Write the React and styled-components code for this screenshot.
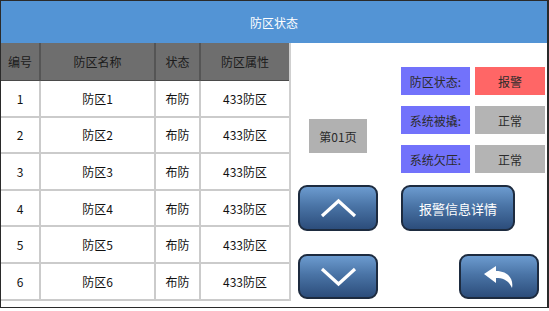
import React from "react";
import styled, { createGlobalStyle } from "styled-components";

const GlobalStyle = createGlobalStyle`
  html, body {
    margin: 0;
    padding: 0;
    background: #ffffff;
  }
  body {
    font-family: "Noto Sans CJK SC", "Liberation Sans", sans-serif;
  }
`;

const Frame = styled.div`
  width: 546px;
  height: 306px;
  border: 1px solid #2a2a2a;
  border-right-width: 2px;
  background: #ffffff;
  display: flex;
  flex-direction: column;
  overflow: hidden;
`;

const TitleBar = styled.div`
  height: 42px;
  background: #5394d5;
  color: #ffffff;
  font-size: 12px;
  display: flex;
  align-items: center;
  justify-content: center;
  flex-shrink: 0;
`;

const Body = styled.div`
  flex: 1;
  display: flex;
`;

const Table = styled.div`
  width: 290px;
  display: grid;
  grid-template-columns: 40px 115px 45px 88px;
  grid-template-rows: 38px repeat(6, 36.6px);
  align-content: start;
  border-right: 2px solid #cfcfcf;
  border-bottom: 2px solid #cfcfcf;
  height: 258px;
  box-sizing: border-box;
`;

const HeadCell = styled.div`
  background: #6e6e6e;
  color: #1b1b1b;
  font-size: 12px;
  display: flex;
  align-items: center;
  justify-content: center;
  border-right: ${(p) => (p.$last ? "none" : "2px solid #555555")};
  border-bottom: 1px solid #4a4a4a;
`;

const Cell = styled.div`
  color: #111111;
  font-size: 12px;
  display: flex;
  align-items: center;
  justify-content: center;
  border-right: ${(p) => (p.$last ? "none" : "2px solid #cbcbcb")};
  border-bottom: 2px solid #cbcbcb;
`;

const Panel = styled.div`
  flex: 1;
  display: grid;
  grid-template-columns: 80px 1fr;
  grid-template-rows: 106px 46px 56px;
  column-gap: 23px;
  row-gap: 12px;
  padding: 24px 0 0 7px;
  align-content: start;
`;

const PageBox = styled.div`
  margin: 52px auto 0;
  width: 58px;
  height: 34px;
  background: #b1b1b1;
  color: #2a2a2a;
  font-size: 12px;
  display: flex;
  align-items: center;
  justify-content: center;
`;

const StatusList = styled.div`
  display: flex;
  flex-direction: column;
  gap: 11px;
`;

const StatusRow = styled.div`
  display: flex;
  gap: 5px;
  height: 28px;
`;

const Tag = styled.div`
  width: ${(p) => p.$w}px;
  background: ${(p) => p.$bg};
  color: #2b2b2b;
  font-size: 12px;
  display: flex;
  align-items: center;
  justify-content: center;
`;

const NavButton = styled.button`
  width: ${(p) => p.$w}px;
  height: ${(p) => p.$h}px;
  align-self: end;
  margin-left: ${(p) => p.$ml || 0}px;
  padding: 0;
  border: 2px solid #1d2b3f;
  border-radius: 9px;
  background: linear-gradient(to bottom, #6c9bcf 0%, #4a74a6 45%, #2c4d7b 100%);
  color: #ffffff;
  font-family: inherit;
  font-size: 13px;
  display: flex;
  align-items: center;
  justify-content: center;
  box-sizing: border-box;
  cursor: pointer;
`;

const rows = [1, 2, 3, 4, 5, 6];

export default function App() {
  return (
    <>
      <GlobalStyle />
      <Frame>
        <TitleBar>防区状态</TitleBar>
        <Body>
          <Table>
            <HeadCell>编号</HeadCell>
            <HeadCell>防区名称</HeadCell>
            <HeadCell>状态</HeadCell>
            <HeadCell $last>防区属性</HeadCell>
            {rows.map((n) => (
              <React.Fragment key={n}>
                <Cell>{n}</Cell>
                <Cell>防区{n}</Cell>
                <Cell>布防</Cell>
                <Cell $last>433防区</Cell>
              </React.Fragment>
            ))}
          </Table>
          <Panel>
            <div>
              <PageBox>第01页</PageBox>
            </div>
            <StatusList>
              <StatusRow>
                <Tag $w={69} $bg="#7272fb">防区状态:</Tag>
                <Tag $w={70} $bg="#ff6666">报警</Tag>
              </StatusRow>
              <StatusRow>
                <Tag $w={69} $bg="#7272fb">系统被撬:</Tag>
                <Tag $w={70} $bg="#b4b4b4">正常</Tag>
              </StatusRow>
              <StatusRow>
                <Tag $w={69} $bg="#7272fb">系统欠压:</Tag>
                <Tag $w={70} $bg="#b4b4b4">正常</Tag>
              </StatusRow>
            </StatusList>
            <NavButton $w={80} $h={46}>
              <svg width="37" height="20" viewBox="0 0 37 20">
                <polyline points="2,18 18.5,3 35,18" fill="none" stroke="#ffffff" strokeWidth="3.2" />
              </svg>
            </NavButton>
            <NavButton $w={114} $h={46}>报警信息详情</NavButton>
            <NavButton $w={80} $h={45}>
              <svg width="37" height="20" viewBox="0 0 37 20">
                <polyline points="2,2 18.5,17 35,2" fill="none" stroke="#ffffff" strokeWidth="3.2" />
              </svg>
            </NavButton>
            <NavButton $w={80} $h={45} $ml={58}>
              <svg width="30" height="22" viewBox="0 0 30 22">
                <path d="M0 8 L12 0 L12 5 C23 5 30 12 28 22 C25 15 20 12 12 12 L12 17 Z" fill="#ffffff" />
              </svg>
            </NavButton>
          </Panel>
        </Body>
      </Frame>
    </>
  );
}
